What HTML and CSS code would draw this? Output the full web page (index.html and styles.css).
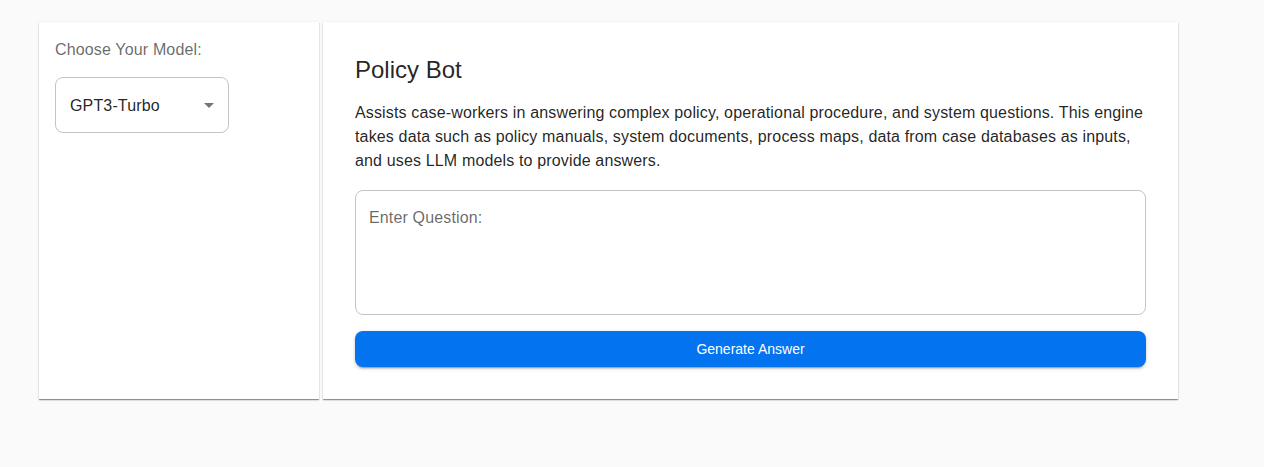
FILE: index.html
```html
<!DOCTYPE html>
<html lang="en">
<head>
<meta charset="utf-8">
<title>Policy Bot</title>
<link rel="stylesheet" href="styles.css">
</head>
<body>
<main class="layout">
  <aside class="card side">
    <div class="side-label">Choose Your Model:</div>
    <div class="select">
      <span class="select-value">GPT3-Turbo</span>
      <svg class="select-icon" viewBox="0 0 24 24" width="24" height="24" aria-hidden="true"><path d="M7 10l5 5 5-5z"/></svg>
    </div>
  </aside>
  <section class="card main">
    <h1 class="title">Policy Bot</h1>
    <p class="desc">Assists case-workers in answering complex policy, operational procedure, and system questions. This engine takes data such as policy manuals, system documents, process maps, data from case databases as inputs, and uses LLM models to provide answers.</p>
    <div class="question"><span class="placeholder">Enter Question:</span></div>
    <button class="generate" type="button">Generate Answer</button>
  </section>
</main>
</body>
</html>
```

FILE: styles.css
```css
html, body {
  margin: 0;
  padding: 0;
}
body {
  background: #fafafa;
  font-family: "Liberation Sans", Arial, sans-serif;
  color: rgba(0, 0, 0, 0.87);
  letter-spacing: 0.00938em;
}
.layout {
  display: flex;
  align-items: stretch;
  gap: 4px;
  padding: 22px 0 40px 39px;
}
.card {
  background: #fff;
  box-shadow: 0 1px 1px 0 rgba(0,0,0,0.35), 0 2px 2px -1px rgba(0,0,0,0.15), 0 0 2px 0 rgba(0,0,0,0.08);
  box-sizing: border-box;
}
.side {
  width: 280px;
  padding: 16px;
}
.side-label {
  font-size: 16px;
  line-height: 24px;
  color: rgba(0, 0, 0, 0.6);
  margin-bottom: 15px;
}
.select {
  width: 174px;
  height: 56px;
  box-sizing: border-box;
  border: 1px solid rgba(0, 0, 0, 0.23);
  border-radius: 8px;
  display: flex;
  align-items: center;
  padding: 0 7px 0 14px;
}
.select-value {
  flex: 1;
  font-size: 16px;
  line-height: 23px;
  color: rgba(0, 0, 0, 0.87);
}
.select-icon {
  fill: rgba(0, 0, 0, 0.54);
  display: block;
}
.main {
  width: 855px;
  padding: 32px;
}
.title {
  margin: 0 0 15px;
  font-size: 24px;
  line-height: 32px;
  font-weight: 400;
  letter-spacing: 0;
  color: rgba(0, 0, 0, 0.87);
}
.desc {
  margin: 0 0 17px;
  font-size: 16px;
  line-height: 24px;
  color: rgba(0, 0, 0, 0.87);
}
.question {
  height: 125px;
  box-sizing: border-box;
  border: 1px solid rgba(0, 0, 0, 0.23);
  border-radius: 8px;
  padding: 15px 13px;
}
.placeholder {
  font-size: 16px;
  line-height: 23px;
  color: rgba(0, 0, 0, 0.6);
}
.generate {
  display: block;
  width: 100%;
  height: 36px;
  margin-top: 16px;
  border: 0;
  border-radius: 8px;
  background: #0373ef;
  color: #fff;
  font-family: "Liberation Sans", Arial, sans-serif;
  font-size: 14px;
  letter-spacing: 0;
  box-shadow: 0 3px 1px -2px rgba(0,0,0,0.2), 0 2px 2px 0 rgba(0,0,0,0.14), 0 1px 5px 0 rgba(0,0,0,0.12);
}
```
